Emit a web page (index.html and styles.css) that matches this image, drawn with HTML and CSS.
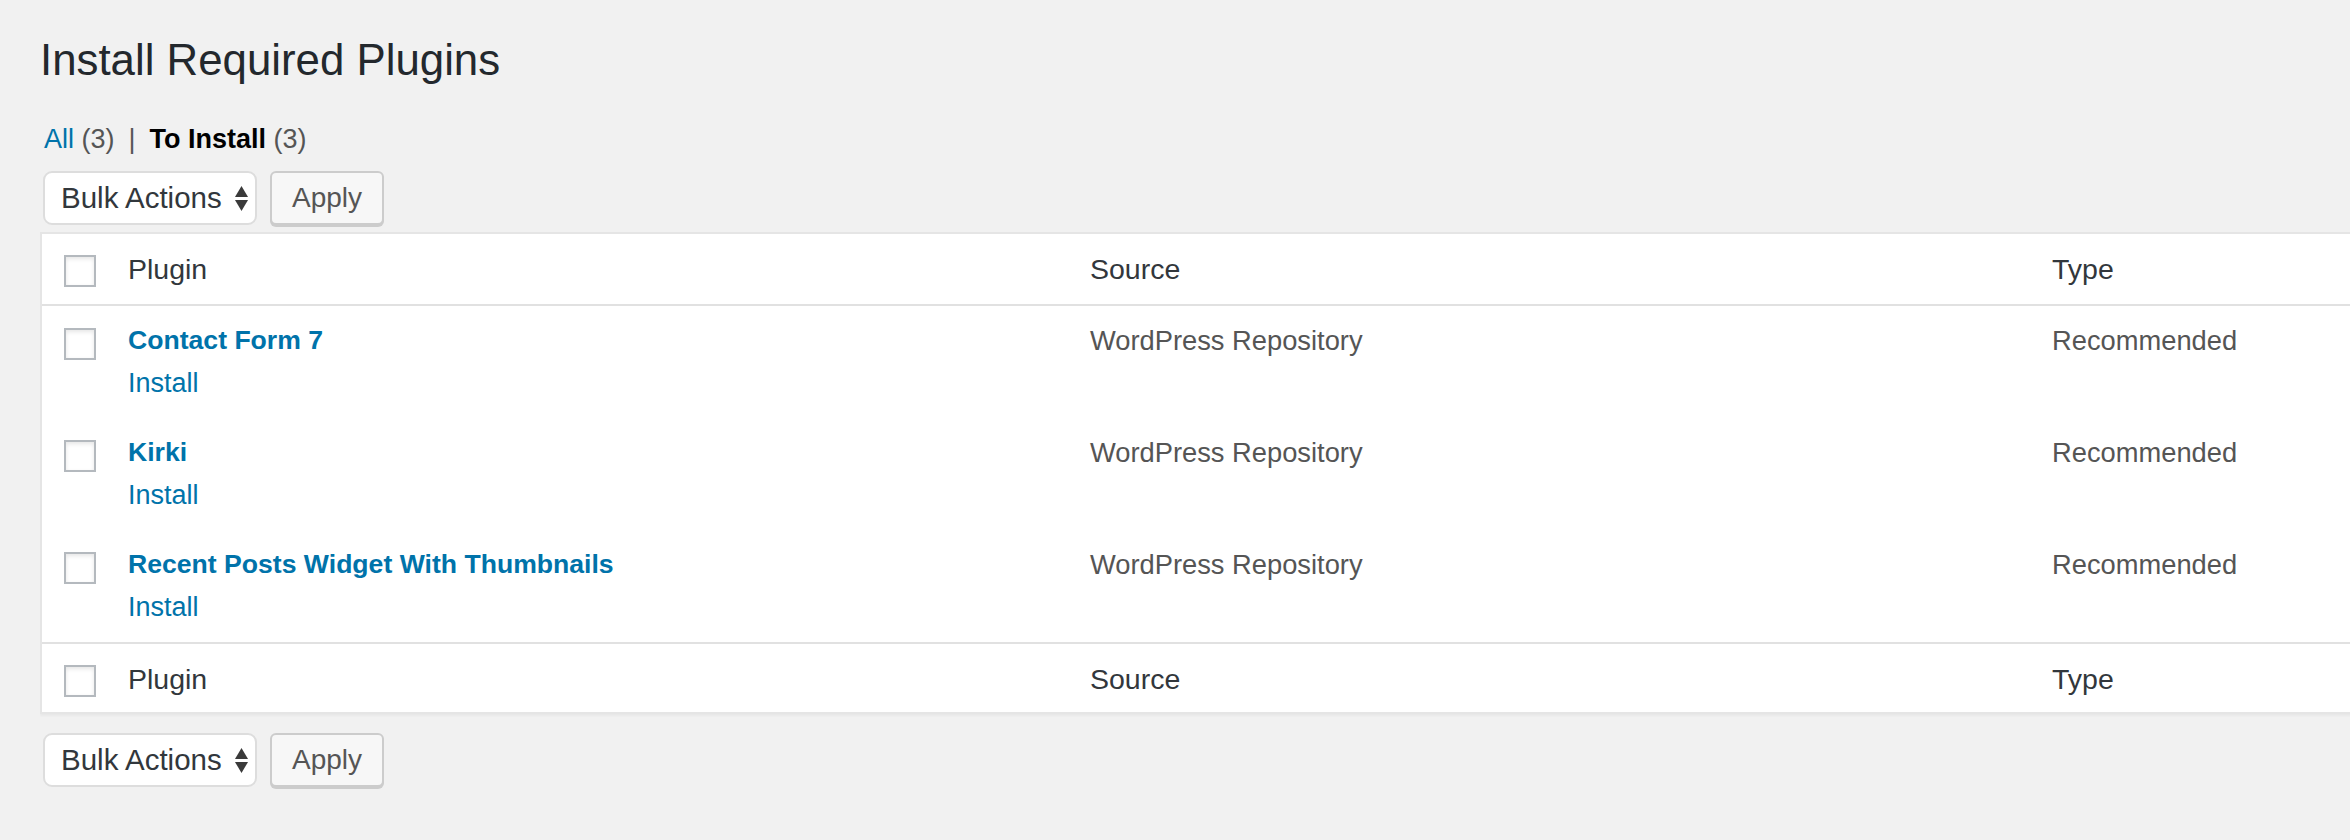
FILE: index.html
```html
<!DOCTYPE html>
<html lang="en">
<head>
<meta charset="utf-8">
<title>Install Required Plugins</title>
<link rel="stylesheet" href="styles.css">
</head>
<body>
<div class="wrap">
  <h1 class="page-title">Install Required Plugins</h1>
  <ul class="subsubsub">
    <li><a class="filter" href="#">All <span class="count">(3)</span></a><span class="sep">|</span></li>
    <li><a class="filter current" href="#">To Install</a>&nbsp;<span class="count">(3)</span></li>
  </ul>

  <div class="tablenav top">
    <div class="select">
      <span class="select-label">Bulk Actions</span>
      <svg class="select-arrows" width="13" height="25" viewBox="0 0 13 25"><polygon points="6.5,0 13,11 0,11"/><polygon points="0,14 13,14 6.5,25"/></svg>
    </div>
    <button class="button" type="button">Apply</button>
  </div>

  <div class="table-clip">
    <table class="plugins">
      <colgroup>
        <col class="col-check">
        <col class="col-main">
        <col class="col-main">
        <col class="col-main">
      </colgroup>
      <thead>
        <tr>
          <th class="check-column"><span class="cb"></span></th>
          <th>Plugin</th>
          <th>Source</th>
          <th>Type</th>
        </tr>
      </thead>
      <tbody>
        <tr>
          <td class="check-column"><span class="cb"></span></td>
          <td class="plugin-cell"><a class="plugin-name" href="#">Contact Form 7</a><div class="row-actions"><a href="#">Install</a></div></td>
          <td>WordPress Repository</td>
          <td>Recommended</td>
        </tr>
        <tr>
          <td class="check-column"><span class="cb"></span></td>
          <td class="plugin-cell"><a class="plugin-name" href="#">Kirki</a><div class="row-actions"><a href="#">Install</a></div></td>
          <td>WordPress Repository</td>
          <td>Recommended</td>
        </tr>
        <tr>
          <td class="check-column"><span class="cb"></span></td>
          <td class="plugin-cell"><a class="plugin-name" href="#">Recent Posts Widget With Thumbnails</a><div class="row-actions"><a href="#">Install</a></div></td>
          <td>WordPress Repository</td>
          <td>Recommended</td>
        </tr>
      </tbody>
      <tfoot>
        <tr>
          <th class="check-column"><span class="cb"></span></th>
          <th>Plugin</th>
          <th>Source</th>
          <th>Type</th>
        </tr>
      </tfoot>
    </table>
  </div>

  <div class="tablenav bottom">
    <div class="select">
      <span class="select-label">Bulk Actions</span>
      <svg class="select-arrows" width="13" height="25" viewBox="0 0 13 25"><polygon points="6.5,0 13,11 0,11"/><polygon points="0,14 13,14 6.5,25"/></svg>
    </div>
    <button class="button" type="button">Apply</button>
  </div>
</div>
</body>
</html>
```

FILE: styles.css
```css
* {
  box-sizing: border-box;
}

html, body {
  margin: 0;
  background: #f1f1f1;
}

body {
  font-family: "Liberation Sans", Arial, sans-serif;
  color: #444;
  overflow: hidden;
}

a {
  color: #0073aa;
  text-decoration: none;
}

.wrap {
  padding: 31px 0 0 40px;
}

.page-title {
  margin: 0;
  font-size: 43.8px;
  font-weight: 400;
  line-height: 58px;
  color: #23282d;
}

.subsubsub {
  list-style: none;
  margin: 30px 0 0;
  padding: 0 0 0 4px;
  display: flex;
  height: 40px;
  line-height: 40px;
  font-size: 27px;
  color: #555;
}

.subsubsub li {
  display: flex;
  align-items: baseline;
}

.subsubsub .count {
  color: #555;
  font-weight: 400;
}

.subsubsub .sep {
  margin: 0 14px;
  color: #555;
}

.subsubsub .current {
  color: #000;
  font-weight: 700;
  font-size: 27px;
}

.tablenav {
  display: flex;
  align-items: flex-start;
  gap: 13px;
  padding-left: 3px;
  height: 56px;
}

.tablenav.top {
  margin-top: 12px;
  height: 54px;
}

.tablenav.bottom {
  margin-top: 15px;
}

.select {
  width: 214px;
  height: 54px;
  display: flex;
  align-items: center;
  padding: 0 7px 0 16px;
  background: #fff;
  border: 2px solid #ddd;
  border-radius: 9px;
  font-size: 29.5px;
  color: #32373c;
}

.select-label {
  flex: 1;
  white-space: nowrap;
}

.select-arrows {
  fill: #3a3a3a;
  display: block;
  flex: none;
}

.button {
  height: 54px;
  padding: 0 20px;
  margin: 0;
  background: #f7f7f7;
  border: 2px solid #ccc;
  border-radius: 6px;
  box-shadow: 0 2px 0 #ccc;
  font-family: "Liberation Sans", Arial, sans-serif;
  font-size: 28px;
  color: #555;
  display: flex;
  align-items: center;
}

.table-clip {
  margin-top: 7px;
  overflow: hidden;
  padding-bottom: 4px;
}

.plugins {
  width: 2956px;
  table-layout: fixed;
  border-collapse: separate;
  border-spacing: 0;
  background: #fff;
  border: 2px solid #e5e5e5;
  box-shadow: 0 2px 2px rgba(0, 0, 0, 0.04);
}

.col-check {
  width: 66px;
}

.col-main {
  width: 962px;
}

.plugins th,
.plugins td {
  text-align: left;
  vertical-align: top;
  font-weight: 400;
  padding: 17px 20px 0;
}

.plugins thead th,
.plugins tfoot th {
  font-size: 28.5px;
  line-height: 38px;
  color: #32373c;
  padding: 16px 20px 16px;
}

.plugins thead th {
  border-bottom: 2px solid #e1e1e1;
}

.plugins tfoot th {
  border-top: 2px solid #e1e1e1;
  padding-bottom: 14px;
}

.plugins tbody td {
  font-size: 27.3px;
  line-height: 35px;
  color: #555;
}

.plugins .check-column,
.plugins thead .check-column,
.plugins tfoot .check-column {
  padding: 21px 0 0 22px;
}

.plugins tbody .check-column {
  padding-top: 22px;
}

.cb {
  display: block;
  width: 32px;
  height: 32px;
  border: 2px solid #b4b9be;
  background: #fff;
  box-shadow: inset 0 2px 4px rgba(0, 0, 0, 0.1);
}

.plugin-name {
  display: block;
  font-size: 26.6px;
  font-weight: 700;
  line-height: 34px;
}

.plugins tbody .row-actions {
  padding: 6px 0 15px;
  font-size: 27px;
  line-height: 40px;
}
```
